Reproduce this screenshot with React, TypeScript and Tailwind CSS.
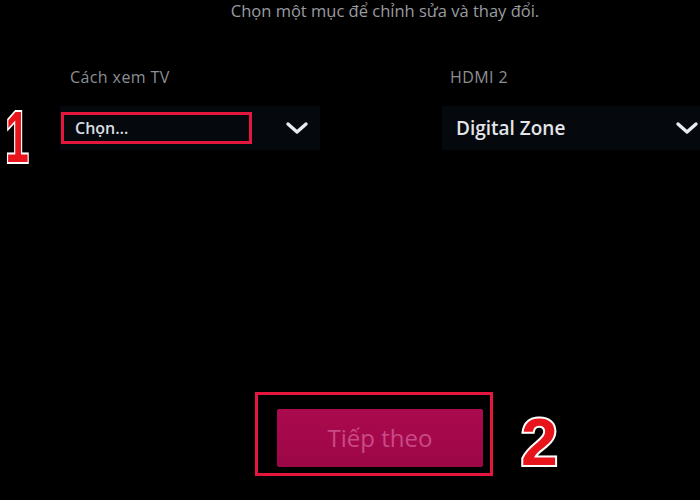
function Marker({ n, className }: { n: string; className?: string }) {
  return (
    <span
      className={`inline-block font-['Liberation_Sans',sans-serif] font-bold leading-none text-[#e8141c] [-webkit-text-stroke:4px_#ffffff] [paint-order:stroke_fill] ${className ?? ''}`}
    >
      {n}
    </span>
  )
}

function Chevron({ className }: { className?: string }) {
  return (
    <svg width="24" height="14" viewBox="0 0 24 14" className={className}>
      <polyline
        points="3,3 12,11 21,3"
        fill="none"
        stroke="#e8ecf2"
        strokeWidth="3.4"
        strokeLinecap="round"
        strokeLinejoin="round"
      />
    </svg>
  )
}

function Field({
  label,
  value,
  highlight,
  width,
  chevronGap,
}: {
  label: string
  value: string
  highlight?: boolean
  width: string
  chevronGap: string
}) {
  return (
    <div className={width}>
      <p className="h-[18px] leading-[18px] text-[16px] tracking-[0.4px] text-[#8c8f94]">{label}</p>
      <div className="mt-[20px] h-[44px] bg-[#05080c] flex items-center">
        {highlight ? (
          <div className="ml-[1px] w-[191px] h-[32px] border-[3px] border-[#e6173f] flex items-center pl-[11px]">
            <span className="text-[16px] font-semibold text-[#d9dde2]">{value}</span>
          </div>
        ) : (
          <span className="pl-[14px] text-[19px] font-semibold text-[#e2e5ea]">{value}</span>
        )}
        <div className="flex-1" />
        <Chevron className={chevronGap} />
      </div>
    </div>
  )
}

export default function App() {
  return (
    <div className="w-[700px] h-[500px] bg-black overflow-hidden font-['Open_Sans','Noto_Sans',sans-serif]">
      <p className="pl-[70px] h-[22px] leading-[22px] text-center text-[16.5px] text-[#9a9ca0]">
        Chọn một mục để chỉnh sửa và thay đổi.
      </p>

      <div className="mt-[46px] flex items-start">
        <div className="w-[60px] h-[82px] pt-[30px] text-[72px] leading-none">
          <Marker n="1" className="scale-x-[0.58] -ml-[3px]" />
        </div>
        <Field label="Cách xem TV" value="Chọn…" highlight width="w-[260px] [&>p]:pl-[10px]" chevronGap="mr-[11px]" />
        <div className="w-[122px]" />
        <Field label="HDMI 2" value="Digital Zone" width="flex-1 [&>p]:pl-[8px]" chevronGap="mr-[1px]" />
      </div>

      <div className="mt-[242px] flex items-start">
        <div className="ml-[255px] w-[238px] h-[84px] border-[3px] border-[#e6173f] pl-[19px] pt-[14px]">
          <div className="w-[206px] h-[58px] bg-gradient-to-b from-[#ab0a4e] to-[#9c0746] rounded-[2px] flex items-center justify-center">
            <span className="text-[24px] text-[#c84a86]">Tiếp theo</span>
          </div>
        </div>
        <div className="ml-[28px] mt-[14px] text-[66px] leading-none">
          <Marker n="2" />
        </div>
      </div>
    </div>
  )
}
